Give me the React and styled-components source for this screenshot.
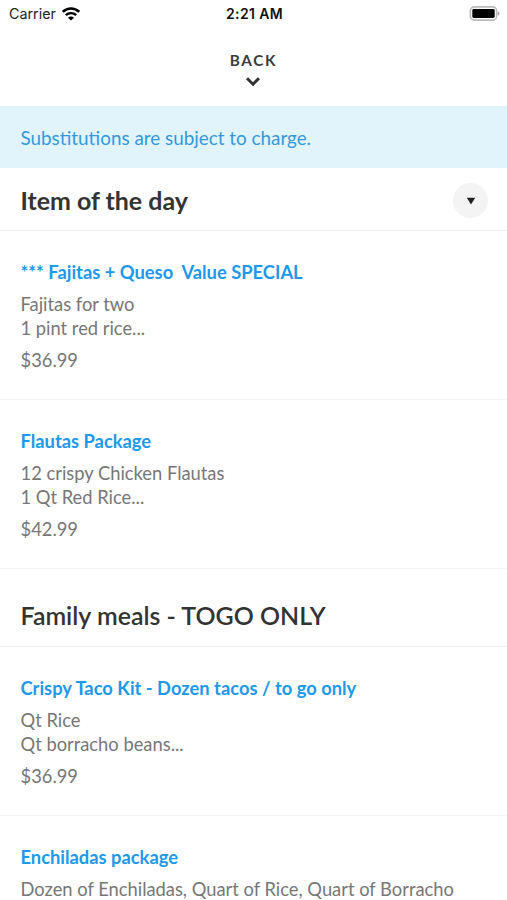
import React, { useState } from "react";
import styled, { createGlobalStyle } from "styled-components";

const GlobalStyle = createGlobalStyle`
  body {
    margin: 0;
    background: #fff;
    overflow: hidden;
  }
  * {
    box-sizing: border-box;
  }
`;

const Screen = styled.div`
  width: 507px;
  height: 900px;
  overflow: hidden;
  background: #fff;
  color: #333;
  font-family: Lato, sans-serif;
`;

const StatusBar = styled.div`
  height: 27px;
  padding: 0 7px 0 9px;
  display: grid;
  grid-template-columns: 1fr auto 1fr;
  align-items: center;
  font-family: Inter, sans-serif;
  font-size: 14.3px;
  color: #222;
`;

const Carrier = styled.div`
  display: flex;
  align-items: center;
  gap: 6px;
`;

const Time = styled.div`
  font-size: 14px;
  font-weight: 600;
  letter-spacing: 0.35px;
  color: #111;
`;

const Battery = styled.svg`
  justify-self: end;
  display: block;
`;

const BackButton = styled.button`
  width: 100%;
  height: 79px;
  padding: 23px 0 0;
  border: none;
  background: none;
  display: flex;
  flex-direction: column;
  align-items: center;
  font: 700 15.3px/20px Lato, sans-serif;
  letter-spacing: 1.7px;
  color: #3c3c3c;

  svg {
    margin: 5.5px 1px 0 0;
  }
`;

const Notice = styled.div`
  height: 62px;
  padding: 2px 20.5px 0;
  display: flex;
  align-items: center;
  background: #e1f4fc;
  color: #3498db;
  font-size: 18.85px;
  line-height: 24px;
`;

const SectionHeader = styled.div`
  height: ${(props) => (props.$first ? "63px" : "78px")};
  padding: ${(props) => (props.$first ? "2px" : "14px")} 19px 0 20.5px;
  display: flex;
  align-items: center;
  justify-content: space-between;
  border-bottom: 1px solid #f3f3f3;
`;

const SectionTitle = styled.h2`
  margin: 0;
  font-size: 24.95px;
  line-height: 30px;
  font-weight: ${(props) => props.$weight};
`;

const RoundButton = styled.button`
  width: 35px;
  height: 35px;
  padding: 1px 0 0;
  border: none;
  border-radius: 50%;
  background: #f4f4f4;
  display: flex;
  align-items: center;
  justify-content: center;
`;

const Item = styled.div`
  height: 169px;
  padding: 29px 20.5px 0;
  border-bottom: 1px solid #f3f3f3;
  font-size: 18.33px;
  line-height: 24px;
  color: #777;
  white-space: pre;
`;

const ItemName = styled.div`
  font-weight: 700;
  color: #2199e8;
`;

const Description = styled.div`
  margin: 8px 0;
`;

const sections = [
  {
    title: "Item of the day",
    weight: 700,
    items: [
      {
        name: "*** Fajitas + Queso  Value SPECIAL",
        lines: ["Fajitas for two", "1 pint red rice..."],
        price: "$36.99",
      },
      {
        name: "Flautas Package",
        lines: ["12 crispy Chicken Flautas", "1 Qt Red Rice..."],
        price: "$42.99",
      },
    ],
  },
  {
    title: "Family meals - TOGO ONLY",
    weight: 600,
    items: [
      {
        name: "Crispy Taco Kit - Dozen tacos / to go only",
        lines: ["Qt Rice", "Qt borracho beans..."],
        price: "$36.99",
      },
      {
        name: "Enchiladas package",
        lines: ["Dozen of Enchiladas, Quart of Rice, Quart of Borracho"],
      },
    ],
  },
];

function WifiIcon() {
  return (
    <svg width="18" height="14" viewBox="0 0 18 14" fill="none" stroke="#000">
      <path d="M0.8 4.9C5.4 0.4 12.6 0.4 17.2 4.9" strokeWidth="2.6" />
      <path d="M3.8 8.2C6.7 5.4 11.3 5.4 14.2 8.2" strokeWidth="2.3" />
      <path d="M9 13.6L6 10.7C7.7 9.1 10.3 9.1 12 10.7Z" fill="#000" stroke="none" />
    </svg>
  );
}

function BatteryIcon() {
  return (
    <Battery width="31" height="15" viewBox="0 0 31 15">
      <rect x="1.4" y="0.9" width="26.2" height="13.2" rx="3.8" fill="#fff" stroke="#bbb" strokeWidth="1.6" />
      <rect x="3.3" y="3" width="22.4" height="9" rx="1.4" fill="#000" />
      <path d="M28.6 5.2C31.2 6 31.2 9 28.6 9.8Z" fill="#aaa" />
    </Battery>
  );
}

function App() {
  const [open, setOpen] = useState(true);

  const onToggle = () => setOpen(!open);

  return (
    <Screen>
      <GlobalStyle />
      <StatusBar>
        <Carrier>
          Carrier <WifiIcon />
        </Carrier>
        <Time>2:21 AM</Time>
        <BatteryIcon />
      </StatusBar>
      <BackButton>
        BACK
        <svg width="16" height="11" viewBox="0 0 16 11" fill="none">
          <path d="M2 2.2L8 8.2L14 2.2" stroke="#333" strokeWidth="3" />
        </svg>
      </BackButton>
      <Notice>Substitutions are subject to charge.</Notice>
      {sections.map((section, index) => (
        <React.Fragment key={section.title}>
          <SectionHeader $first={index === 0}>
            <SectionTitle $weight={section.weight}>{section.title}</SectionTitle>
            {index === 0 && (
              <RoundButton onClick={onToggle} aria-expanded={open}>
                <svg width="10" height="8" viewBox="0 0 10 8">
                  <path d="M0.8 0.8H9.2L5 7.6Z" fill="#222" />
                </svg>
              </RoundButton>
            )}
          </SectionHeader>
          {(open || index > 0) &&
            section.items.map((item) => (
              <Item key={item.name}>
                <ItemName>{item.name}</ItemName>
                <Description>
                  {item.lines.map((line) => (
                    <div key={line}>{line}</div>
                  ))}
                </Description>
                {item.price}
              </Item>
            ))}
        </React.Fragment>
      ))}
    </Screen>
  );
}

export default App;
